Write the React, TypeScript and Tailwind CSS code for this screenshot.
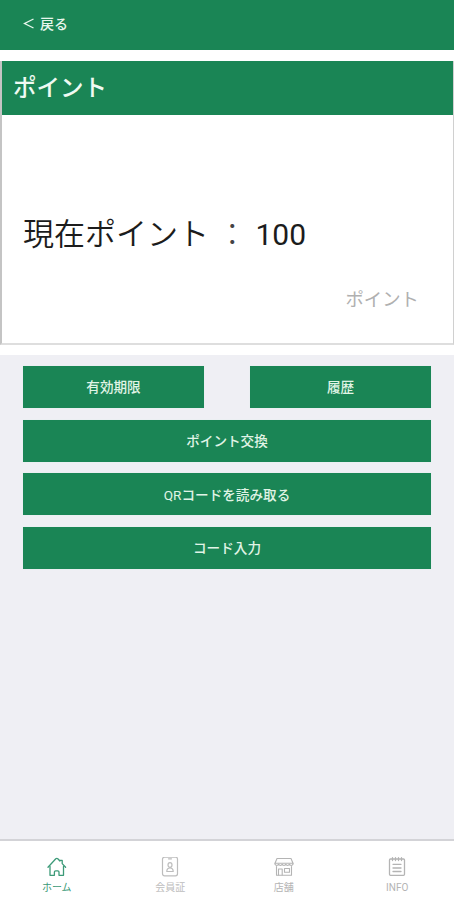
import type { ReactNode } from "react";

const GREEN_BUTTON =
  "flex h-[42px] items-center justify-center bg-[#1a8555] pt-[2px] text-[13.6px] font-medium leading-none text-[#e0f4e6] shadow-[0_0_1px_#d8efe4]";

function ActionButton({ children, className = "" }: { children: ReactNode; className?: string }) {
  return <button className={`${GREEN_BUTTON} ${className}`}>{children}</button>;
}

function HomeIcon() {
  return (
    <svg width="20" height="20" viewBox="0 0 20 20" fill="none" stroke="currentColor" strokeWidth="1.3" strokeLinejoin="round" strokeLinecap="round">
      <path d="M1 10.2 8.8 1.8q1-.8 2 0l2.1 2.2V3.3h2.3v3.3l3.4 3.6" />
      <path d="M3 9.5v8.8h4.4v-3.2q0-1.3 1.3-1.3h2q1.3 0 1.3 1.3v3.2h4.5V9.5" />
    </svg>
  );
}

function MemberIcon() {
  return (
    <svg width="20" height="20" viewBox="0 0 20 20" fill="none" stroke="currentColor" strokeWidth="1.2" strokeLinejoin="round" strokeLinecap="round">
      <rect x="2.5" y="0.2" width="15" height="18.6" rx="2" />
      <path d="M8.5 1.8h3" />
      <ellipse cx="10" cy="8" rx="2" ry="2.4" />
      <path d="M6.8 14.5c0-2.4 1.2-3.5 3.2-3.5s3.2 1.1 3.2 3.5z" />
    </svg>
  );
}

function ShopIcon() {
  return (
    <svg width="20" height="20" viewBox="0 0 20 20" fill="none" stroke="currentColor" strokeWidth="1.1" strokeLinejoin="round" strokeLinecap="round">
      <path d="M3 1.5h14l2 4.8H1z" />
      <path d="M1 6.3v1a2 2 0 0 0 3.6 0 2 2 0 0 0 3.6 0 2 2 0 0 0 3.6 0 2 2 0 0 0 3.6 0 2 2 0 0 0 3.6 0v-1" />
      <path d="M2.5 9.5v8.8h15V9.5" />
      <path d="M4.5 18v-6h3.7v6M10.5 11.5h5v3.7h-5z" />
    </svg>
  );
}

function InfoIcon() {
  return (
    <svg width="20" height="20" viewBox="0 0 20 20" fill="none" stroke="currentColor" strokeWidth="1.3" strokeLinejoin="round" strokeLinecap="round">
      <rect x="2.5" y="2" width="15" height="16.3" rx="1" />
      <path d="M5.5.7v2.8M8.5.7v2.8M11.5.7v2.8M14.5.7v2.8M6 7.3h8M6 11h8M6 14.5h8" />
    </svg>
  );
}

const TABS = [
  { label: "ホーム", icon: <HomeIcon />, color: "text-[#3c9a78]" },
  { label: "会員証", icon: <MemberIcon />, color: "text-[#bdbdbd]" },
  { label: "店舗", icon: <ShopIcon />, color: "text-[#b4b4b4]" },
  { label: "INFO", icon: <InfoIcon />, color: "text-[#b4b4b4]" },
];

export default function App() {
  return (
    <div className="flex h-[900px] w-[454px] flex-col overflow-hidden bg-[#efeff4] font-[Roboto,'Noto_Sans_CJK_JP',sans-serif]">
      <header className="flex h-[50px] shrink-0 items-start bg-[#1a8555] pl-[23px] pt-[14px] text-[14px] leading-[20px] text-[#e8f6ec]">
        <button className="flex items-center gap-[6px] font-medium">
          <svg width="11" height="12" viewBox="0 0 11 12" fill="none" stroke="currentColor" strokeWidth="1.4">
            <path d="M10.5 1 1.6 5.5l8.9 4.5" />
          </svg>
          戻る
        </button>
      </header>

      <div className="shrink-0 bg-white pb-[10px] pt-[11px]">
        <section className="flex h-[284px] flex-col border-b-2 border-l-2 border-r border-b-[#dedede] border-l-[#c4c4c4] border-r-[#d0d0d0]">
          <h1 className="flex h-[54px] items-center bg-[#1a8555] pl-[11px] pt-[2px] text-[23.5px] font-medium leading-none text-[#effaf2]">
            ポイント
          </h1>
          <p className="mt-[98px] whitespace-pre pl-[21px] text-[31px] leading-[44px] text-[#1c1c1c]">
            <span className="font-[350]">現在ポイント</span> <span className="font-light text-[#444]">：</span>{" "}
            <span className="text-[30px]">100</span>
          </p>
          <p className="mt-[29px] pr-[34px] text-right text-[18.4px] leading-[28px] text-[#b0b0b0]">ポイント</p>
        </section>
      </div>

      <main className="flex grow flex-col gap-[11.7px] px-[23px] pt-[11px]">
        <div className="flex gap-[46px]">
          <ActionButton className="flex-1">有効期限</ActionButton>
          <ActionButton className="flex-1">履歴</ActionButton>
        </div>
        <ActionButton>ポイント交換</ActionButton>
        <ActionButton>
          <span className="font-normal">QR</span>コードを読み取る
        </ActionButton>
        <ActionButton>コード入力</ActionButton>
      </main>

      <nav className="grid h-[61px] shrink-0 grid-cols-4 border-t-2 border-[#d3d3d7] bg-white">
        {TABS.map((tab) => (
          <div key={tab.label} className={`flex flex-col items-center pt-[16px] ${tab.color}`}>
            {tab.icon}
            <span className="mt-[5px] text-[10px] leading-[12px]">{tab.label}</span>
          </div>
        ))}
      </nav>
    </div>
  );
}
